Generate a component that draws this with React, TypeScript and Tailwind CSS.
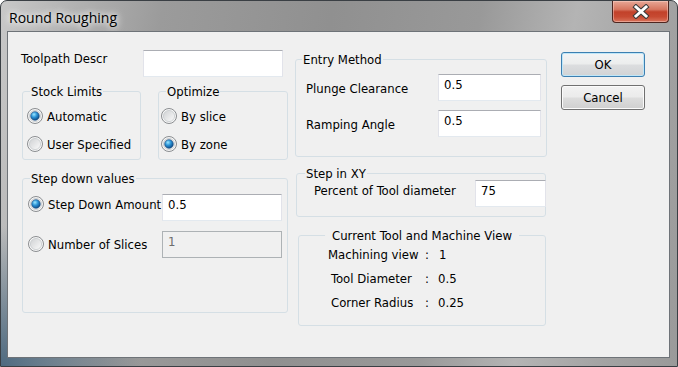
import React from "react";

const FONT = "font-[family-name:'DejaVu_Sans_Condensed','DejaVu_Sans',sans-serif]";

function Radio({ checked }: { checked?: boolean }) {
  return (
    <svg width="16" height="16" viewBox="0 0 16 16" className="shrink-0">
      <defs>
        <linearGradient id="rgoff" x1="0" y1="0" x2="1" y2="1">
          <stop offset="0" stopColor="#cfd1d3" />
          <stop offset="1" stopColor="#fbfbfb" />
        </linearGradient>
        <radialGradient id="rgon" cx="0.38" cy="0.32" r="0.75">
          <stop offset="0" stopColor="#9be6ff" />
          <stop offset="0.45" stopColor="#2b93d6" />
          <stop offset="1" stopColor="#0a3f78" />
        </radialGradient>
      </defs>
      <circle cx="8" cy="8" r="7.5" fill="#f6f6f6" stroke="#8a8d90" />
      <circle cx="8" cy="8" r="5.6" fill="url(#rgoff)" stroke="#c2c5c8" strokeWidth="0.7" />
      {checked && <circle cx="8" cy="8" r="4.3" fill="url(#rgon)" stroke="#1a4d84" strokeWidth="0.6" />}
    </svg>
  );
}

function RadioRow({ checked, label }: { checked?: boolean; label: string }) {
  return (
    <div className="flex items-center gap-[4px] h-[16px] leading-[16px] whitespace-nowrap">
      <Radio checked={checked} />
      <span className="pt-[1px]">{label}</span>
    </div>
  );
}

function Group({
  title,
  className,
  legendClass,
  children,
}: {
  title: string;
  className: string;
  legendClass: string;
  children?: React.ReactNode;
}) {
  return (
    <div className={"relative border border-[#d5dfe5] rounded-[3px] shrink-0 " + className}>
      <span className={"absolute -top-[8px] bg-[#f0f0f0] leading-[16px] whitespace-nowrap " + legendClass}>{title}</span>
      {children}
    </div>
  );
}

function TextBox({ value, className }: { value?: string; className: string }) {
  return (
    <div
      className={
        "h-[27px] shrink-0 bg-white border border-[#e2e3ea] border-t-[#abadb3] border-b-[#e3e9ef] pl-[5px] pt-[2px] leading-[16px] " +
        className
      }
    >
      {value}
    </div>
  );
}

function DisabledBox({ value, className }: { value?: string; className: string }) {
  return (
    <div
      className={
        "h-[27px] shrink-0 bg-[#f0f0f0] border border-[#adb2b5] text-[#6d6d6d] pl-[5px] pt-[2px] leading-[16px] " + className
      }
    >
      {value}
    </div>
  );
}

export default function App() {
  return (
    <div className="w-[678px] h-[367px] flex flex-col rounded-t-[7px] border border-[#3a3f44] bg-[radial-gradient(circle_at_0%_100%,#4e6a80_0px,rgba(78,106,128,0)_140px),linear-gradient(100deg,#c8c8c8_0%,#b2b2b2_10%,#9b9b9b_22%,#909090_45%,#999999_65%,#b4b4b4_78%,#a3a3a3_90%,#9a9a9a_100%)] overflow-hidden">
      {/* title bar */}
      <div className="h-[30px] flex items-start shrink-0">
        <div className="ml-[8px] mt-[7px] text-[14px] leading-[20px] text-black font-['Open_Sans',sans-serif] [text-shadow:0_0_6px_#ffffff,0_0_10px_#ffffff]">
          Round Roughing
        </div>
        <div className="ml-auto mr-[8px] w-[57px] h-[22px] rounded-b-[4px] border border-t-0 border-[#4e2620] bg-[linear-gradient(#e7a796_0%,#d67660_40%,#c2412a_52%,#c74a32_75%,#d9745c_100%)] shadow-[inset_0_0_0_1px_rgba(255,220,210,0.45)] flex items-center justify-center">
          <svg width="18" height="15" viewBox="0 0 18 15">
            <g strokeLinecap="square">
              <line x1="4" y1="3" x2="14" y2="12" stroke="#3b3b3b" strokeWidth="5" />
              <line x1="14" y1="3" x2="4" y2="12" stroke="#3b3b3b" strokeWidth="5" />
              <line x1="4" y1="3" x2="14" y2="12" stroke="#ffffff" strokeWidth="3" />
              <line x1="14" y1="3" x2="4" y2="12" stroke="#ffffff" strokeWidth="3" />
            </g>
          </svg>
        </div>
      </div>

      {/* client */}
      <div
        className={
          "ml-[6px] mr-[7px] mb-[8px] flex-1 border border-[#6e7378] bg-[#f0f0f0] flex items-start text-[13px] leading-[16px] text-black " +
          FONT
        }
      >
        {/* left column */}
        <div className="ml-[13px] w-[268px] shrink-0 flex flex-col">
          <div className="mt-[18px] flex items-start">
            <div className="w-[122px] shrink-0 pt-[1px]">Toolpath Descr</div>
            <TextBox className="w-[140px]" />
          </div>
          <div className="mt-[14px] flex">
            <Group title="Stock Limits" className="ml-[1px] w-[119px] h-[69px]" legendClass="left-[7px] px-[1px]">
              <div className="pt-[16px] pl-[4px] flex flex-col gap-[12px]">
                <RadioRow checked label="Automatic" />
                <RadioRow label="User Specified" />
              </div>
            </Group>
            <Group title="Optimize" className="ml-[17px] w-[130px] h-[69px]" legendClass="left-[7px] px-[1px]">
              <div className="pt-[16px] pl-[2px] flex flex-col gap-[12px]">
                <RadioRow label="By slice" />
                <RadioRow checked label="By zone" />
              </div>
            </Group>
          </div>
          <Group title="Step down values" className="mt-[18px] ml-[1px] w-[266px] h-[135px]" legendClass="left-[7px] px-[1px]">
            <div className="pt-[15px] pl-[5px] flex flex-col gap-[10px]">
              <div className="flex items-start">
                <div className="w-[134px] shrink-0 mt-[2px]">
                  <RadioRow checked label="Step Down Amount" />
                </div>
                <TextBox className="w-[120px]" value="0.5" />
              </div>
              <div className="flex items-start">
                <div className="w-[134px] shrink-0 mt-[5px]">
                  <RadioRow label="Number of Slices" />
                </div>
                <DisabledBox className="w-[120px]" value="1" />
              </div>
            </div>
          </Group>
        </div>

        {/* middle column */}
        <div className="ml-[6px] w-[252px] shrink-0 flex flex-col">
          <Group title="Entry Method" className="mt-[27px] w-[252px] h-[98px]" legendClass="left-[6px] px-[1px]">
            <div className="pt-[14px] pl-[10px] flex flex-col gap-[9px]">
              <div className="flex items-start">
                <div className="w-[132px] shrink-0 mt-[7px]">Plunge Clearance</div>
                <TextBox className="w-[103px]" value="0.5" />
              </div>
              <div className="flex items-start">
                <div className="w-[132px] shrink-0 mt-[7px]">Ramping Angle</div>
                <TextBox className="w-[103px]" value="0.5" />
              </div>
            </div>
          </Group>
          <Group title="Step in XY" className="mt-[16px] ml-[1px] w-[250px] h-[44px]" legendClass="left-[8px] px-[1px]">
            <div className="pt-[6px] pl-[17px] flex items-start">
              <div className="w-[161px] shrink-0 mt-[3px]">Percent of Tool diameter</div>
              <TextBox className="w-[71px]" value="75" />
            </div>
          </Group>
          <Group
            title="Current Tool and Machine View"
            className="mt-[18px] ml-[3px] w-[248px] h-[91px]"
            legendClass="left-1/2 -translate-x-1/2 px-[7px]"
          >
            <div className="pt-[11px] flex flex-col gap-[8px] whitespace-nowrap">
              <div className="ml-[29px] flex h-[16px]">
                <span className="w-[97px] shrink-0">Machining view</span>
                <span className="w-[14px] shrink-0">:</span>
                <span>1</span>
              </div>
              <div className="ml-[32px] flex h-[16px]">
                <span className="w-[94px] shrink-0">Tool Diameter</span>
                <span className="w-[13px] shrink-0">:</span>
                <span>0.5</span>
              </div>
              <div className="ml-[32px] flex h-[16px]">
                <span className="w-[94px] shrink-0">Corner Radius</span>
                <span className="w-[13px] shrink-0">:</span>
                <span>0.25</span>
              </div>
            </div>
          </Group>
        </div>

        {/* buttons */}
        <div className="ml-[14px] w-[84px] shrink-0 flex flex-col">
          <div className="mt-[20px] h-[25px] rounded-[3px] border border-[#3c7fb1] shadow-[inset_0_0_0_1px_#bfe6f8] bg-[linear-gradient(#f3f4f5_0%,#eceded_48%,#dcdddf_52%,#d1d3d5_100%)] flex items-center justify-center pt-[1px]">
            OK
          </div>
          <div className="mt-[8px] h-[25px] rounded-[3px] border border-[#707070] shadow-[inset_0_0_0_1px_#fbfbfb] bg-[linear-gradient(#f2f2f2_0%,#ebebeb_48%,#dddddd_52%,#cfcfcf_100%)] flex items-center justify-center pt-[1px]">
            Cancel
          </div>
        </div>
      </div>
    </div>
  );
}
